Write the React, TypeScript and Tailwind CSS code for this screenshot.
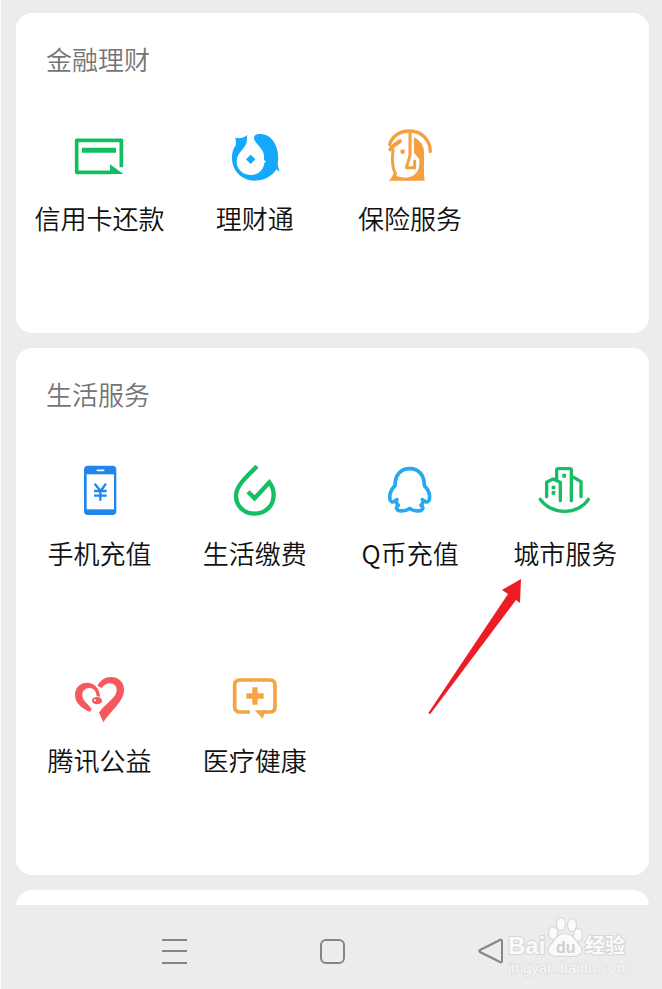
import type { ReactNode } from "react";

type Service = {
  label: string;
  icon: ReactNode;
  marked?: boolean;
};

const financeServices: Service[] = [
  {
    label: "信用卡还款",
    icon: (
      <g fill="none" stroke="#10bf62">
        <path d="M184 142V61H50v96h104" strokeWidth="11" strokeLinejoin="round" />
        <path d="M66 91h102" strokeWidth="15" />
        <path d="M150 133l40 29h-40z" fill="#10bf62" stroke="none" />
      </g>
    ),
  },
  {
    label: "理财通",
    icon: (
      <g fill="#14a9fa">
        <path d="M97 44C88 52 78 57 61 53c2 9 2 16 1 23C54 87 50 101 51 118c2 37 31 64 68 64 31 0 54-15 65-34l10 7c-4-12-7-21-5-32C193 80 172 42 134 42c-11 0-17 4-17 12 1 16 24 27 29 47 2 8 1 15 1 20l6 2-5 6c-2 20-18 36-40 36-24 0-43-17-43-40 0-32 31-39 31-66 0-6-1-10 1-15z" />
        <path d="M107 104l14 14-14 14-14-14z" />
      </g>
    ),
  },
  {
    label: "保险服务",
    icon: (
      <g fill="none" stroke="#f4a03f" strokeWidth="10" strokeLinecap="round" strokeLinejoin="round">
        <path d="M59 74C65 50 88 33 118 33c37 0 62 27 63 61" />
        <path d="M120 36v70l-11 37h25v-20" strokeWidth="9" />
        <path d="M90 64C80 70 70 76 61 88" strokeWidth="12" />
        <path d="M69 90c-3 26-3 54 8 72" strokeWidth="9" />
        <path
          d="M132 52c18 9 30 24 30 44v66c0 8 2 14 2 20H57c5-5 10-10 13-22 9 10 21 13 35 13 25 0 43-16 43-42v-13l-16-20z"
          fill="#f4a03f"
          stroke="none"
        />
        <circle cx="98" cy="95" r="7" fill="#f4a03f" stroke="none" />
      </g>
    ),
  },
];

const lifeServices: Service[] = [
  {
    label: "手机充值",
    icon: (
      <g>
        <rect x="72" y="32" width="97" height="148" rx="12" fill="#1e86ec" />
        <path d="M80 58h82v105H80z" fill="#fff" />
        <path d="M112 46h19" stroke="#fff" strokeWidth="5" strokeLinecap="round" />
        <path d="M104 86l18 22 16-22M102 108h38M102 122h38M121 108v29" fill="none" stroke="#1e86ec" strokeWidth="7" />
      </g>
    ),
  },
  {
    label: "生活缴费",
    icon: (
      <g fill="none" stroke="#16bd64" strokeWidth="13">
        <path d="M126 34C101 59 63 91 63 122c0 32 25 54 56 54 33 0 57-24 57-56 0-15-5-28-13-38l-44 48-20-20" />
      </g>
    ),
  },
  {
    label: "Q币充值",
    icon: (
      <g fill="none" stroke="#25aaf0" strokeWidth="11" strokeLinejoin="round" strokeLinecap="round">
        <path d="M81 134l-7 4c-5 5-12 4-14-4-3-14 2-29 15-42 0-31 16-51 44-51s44 20 44 51c13 13 18 28 15 42-2 8-9 9-14 4l-7-4" />
        <path d="M78 138c1 6 3 9 7 13-9 5-6 14 3 16 12 2 22 0 31-7 9 7 19 9 31 7 9-2 12-11 3-16 4-4 6-7 7-13" />
      </g>
    ),
  },
  {
    label: "城市服务",
    marked: true,
    icon: (
      <g fill="none" stroke="#16bd64" strokeWidth="10" strokeLinecap="round" strokeLinejoin="round">
        <path d="M65 125V82l19-10 22 10v55M95 74V46c0-3 3-5 6-5h33c3 0 5 2 5 5v91M144 66l24 14v45" />
        <path d="M46 133c14 21 42 36 73 36s58-15 71-36" />
        <path d="M112 56h11v12h-11zM80 92h11v11H80zM80 108h11v11H80z" fill="#16bd64" stroke="none" />
      </g>
    ),
  },
  {
    label: "腾讯公益",
    icon: (
      <g fill="#f45a5d" transform="translate(0 9)">
        <path d="M90 141C64 129 45 114 45 90c0-23 16-37 36-37 21 0 39 17 39 42l-10-1c-1-16-10-25-22-25-13 0-21 9-21 21 0 19 19 27 28 42z" />
        <path d="M112 62c9-16 24-26 41-26 25 0 42 19 39 44-4 33-42 58-62 92l-13-29c14-24 52-44 53-66 1-13-8-22-20-22-10 0-18 5-25 14z" />
        <ellipse cx="111" cy="107" rx="15" ry="11" />
        <circle cx="105" cy="106" r="3" fill="#fff" />
      </g>
    ),
  },
  {
    label: "医疗健康",
    icon: (
      <g fill="none" stroke="#f6a341" strokeWidth="11" transform="translate(0 8)">
        <path d="M105 142H75c-11 0-16-6-16-15V61c0-10 5-15 16-15h89c11 0 16 5 16 15v66c0 9-5 15-16 15h-22" />
        <path d="M119 137h33l-9 25z" fill="#f6a341" stroke="none" />
        <path d="M94 94h52M120 68v52" strokeWidth="16" />
      </g>
    ),
  },
];

function ServiceItem({ label, icon, marked }: Service) {
  return (
    <div className="relative">
      <button type="button" className="flex w-full flex-col items-center gap-2 whitespace-nowrap">
        <svg viewBox="0 0 240 210" className="h-[70px] w-20" aria-hidden="true">
          {icon}
        </svg>
        <span className="text-[26px] leading-10">{label}</span>
      </button>
      {marked && <PointerArrow />}
    </div>
  );
}

// Red arrow pointing at the service above it
function PointerArrow() {
  return (
    <svg
      viewBox="0 0 100 142"
      className="pointer-events-none absolute top-[120px] left-[-63px] z-10 h-[142px] w-[100px]"
      aria-hidden="true"
    >
      <path d="M96 4L77 15l6 4L4 137c-1 2 1 3 2 1L91 25l4 3z" fill="#ed1c24" />
    </svg>
  );
}

function ServiceCard({ title, services }: { title: string; services: Service[] }) {
  return (
    <section className="rounded-2xl bg-white px-1.5 pt-[26px] pb-[95px]">
      <h2 className="pl-6 text-[26px] leading-10 text-[#757575]">{title}</h2>
      <div className="mt-[41px] grid grid-cols-4 gap-y-[89px]">
        {services.map((service) => (
          <ServiceItem key={service.label} {...service} />
        ))}
      </div>
    </section>
  );
}

function Watermark() {
  return (
    <svg
      viewBox="0 0 144 68"
      className="pointer-events-none absolute top-2 right-6 h-[68px] w-36 font-['Liberation_Sans','Noto_Sans_CJK_SC',sans-serif]"
      aria-label="Baidu 经验"
    >
      <g fill="#fafafa" stroke="#d6d6d6" strokeWidth="2" paintOrder="stroke">
        <text x="14" y="41" fontSize="24" fontWeight="700">Bai</text>
        <ellipse cx="59" cy="20" rx="4" ry="6" />
        <ellipse cx="67" cy="11" rx="4" ry="6" />
        <ellipse cx="78" cy="12" rx="4" ry="6" />
        <ellipse cx="84" cy="22" rx="4" ry="6" />
        <path d="M71 21c8 0 10 7 14 11 5 5 2 11-6 11-5 0-10-1-16 0-8 0-11-6-6-11 4-4 6-11 14-11z" />
        <text x="91" y="40" fontSize="20" fontWeight="700">经验</text>
        <text x="14" y="60" fontSize="15" strokeWidth="1">jingyan.baidu.com</text>
      </g>
      <text x="62" y="40" fontSize="16" fontWeight="700" fill="#cfcfcf">du</text>
    </svg>
  );
}

function NavBar() {
  return (
    <nav className="relative flex h-[84px] shrink-0 items-center justify-center gap-[130px] bg-[#ececec] pt-2 text-[#858585]">
      <button type="button" aria-label="菜单">
        <svg viewBox="0 0 28 28" className="size-7" fill="none" stroke="currentColor" strokeWidth="2">
          <path d="M2 3h25M2 14h25M2 26h25" />
        </svg>
      </button>
      <button type="button" aria-label="主页">
        <svg viewBox="0 0 28 28" className="size-7" fill="none" stroke="currentColor" strokeWidth="2">
          <rect x="3" y="3" width="23" height="23" rx="5" />
        </svg>
      </button>
      <button type="button" aria-label="返回">
        <svg viewBox="0 0 28 28" className="size-7" fill="none" stroke="currentColor" strokeWidth="2" strokeLinejoin="round">
          <path d="M24 3c1-1 2 0 2 1v20c0 1-1 2-2 1L4 15c-1-1-1-2 0-2z" />
        </svg>
      </button>
      <Watermark />
    </nav>
  );
}

export default function App() {
  return (
    <div className="flex h-screen flex-col border-l border-white bg-[#ececec] font-['Noto_Sans_CJK_SC',sans-serif] font-[350] text-[#111111]">
      <main className="min-h-0 flex-1 space-y-[15px] overflow-hidden pt-[13px] pr-[13px] pl-[15px]">
        <ServiceCard title="金融理财" services={financeServices} />
        <ServiceCard title="生活服务" services={lifeServices} />
        <section className="h-20 rounded-2xl bg-white" />
      </main>
      <NavBar />
    </div>
  );
}
